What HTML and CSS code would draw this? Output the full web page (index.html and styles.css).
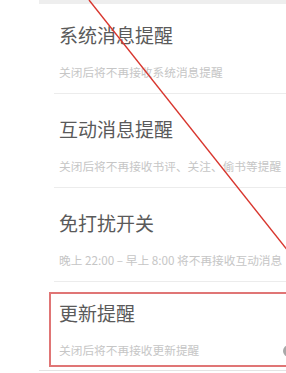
FILE: index.html
```html
<!DOCTYPE html>
<html lang="zh-CN">
<head>
  <meta charset="UTF-8" />
  <meta name="viewport" content="width=device-width, initial-scale=1.0"/>
  <title>消息提醒设置</title>
  <link rel="stylesheet" href="styles.css">
</head>
<body>
  <div class="screen">
    <div class="topbar"></div>
    <ul class="list">
      <li class="item first">
        <div class="text">
          <div class="title">系统消息提醒</div>
          <div class="desc">关闭后将不再接收系统消息提醒</div>
        </div>
      </li>
      <li class="item">
        <div class="text">
          <div class="title">互动消息提醒</div>
          <div class="desc">关闭后将不再接收书评、关注、偷书等提醒</div>
        </div>
      </li>
      <li class="item">
        <div class="text">
          <div class="title">免打扰开关</div>
          <div class="desc">晚上 22:00 – 早上 8:00 将不再接收互动消息</div>
        </div>
      </li>
      <li class="item last">
        <div class="text">
          <div class="title">更新提醒</div>
          <div class="desc">关闭后将不再接收更新提醒</div>
        </div>
        <span class="knob"></span>
      </li>
    </ul>
  </div>

  <!-- annotation marks drawn over the screenshot -->
  <div class="mark-box"></div>
  <svg class="mark-line" width="286" height="373" viewBox="0 0 286 373">
    <line x1="89" y1="0" x2="292" y2="256" stroke="#d8362e" stroke-width="1.4" />
  </svg>
</body>
</html>
```
FILE: styles.css
```css
html, body {
  margin: 0;
  padding: 0;
  background: white;
  overflow: hidden;
  height: 373px;
}
body {
  font-family: "Noto Sans CJK SC", "Noto Sans", sans-serif;
  position: relative;
}
.screen {
  margin-left: 39px;
  overflow: hidden;
  background: white;
}
.topbar {
  height: 4px;
  background-color: #eeeeee;
}
.list {
  list-style: none;
  margin: 0;
  padding: 0;
  border-bottom: 1px solid #e4e4e4;
}
.item {
  display: flex;
  margin-left: 15px;
  padding: 24px 0 14px 5px;
  border-bottom: 1px solid #ececec;
}
.item.first {
  padding-top: 20px;
}
.item.last {
  padding-top: 20px;
  padding-bottom: 13px;
  border-bottom: none;
}
.text {
  flex: 1;
  min-width: 0;
}
.title {
  font-size: 19px;
  line-height: 22px;
  color: #5a5a5a;
  white-space: nowrap;
}
.desc {
  margin-top: 19px;
  font-size: 11.7px;
  line-height: 14px;
  color: #c6c6c6;
  white-space: nowrap;
}
.knob {
  flex: none;
  align-self: flex-end;
  width: 12px;
  height: 12px;
  margin-right: -9px;
  border-radius: 50%;
  background-color: #a8a8a8;
}
.mark-box {
  position: absolute;
  left: 49px;
  right: 0;
  top: 292px;
  height: 71px;
  border: 2px solid #e07575;
  border-right: none;
}
.mark-line {
  position: absolute;
  left: 0;
  top: 0;
}
```
